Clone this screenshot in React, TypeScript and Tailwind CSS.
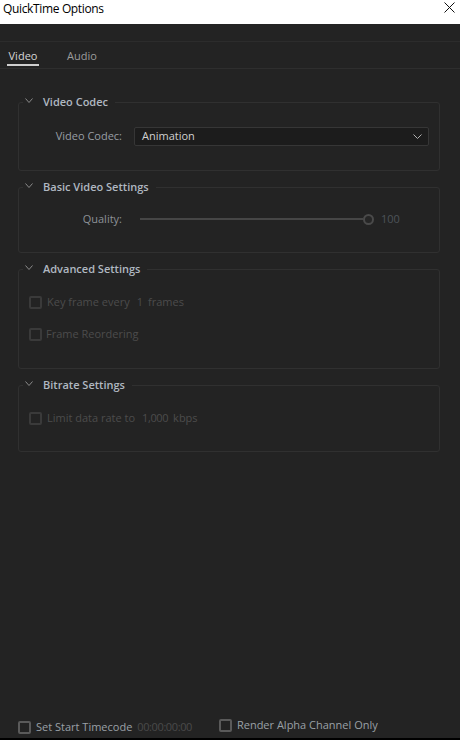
import React from "react";

const font = { fontFamily: '"Open Sans", "Noto Sans", sans-serif' };

function Chevron({ className, w = 9 }: { className?: string; w?: number }) {
  return (
    <svg width={w} height="5" viewBox={`0 0 ${w} 5`} className={className}>
      <path d={`M0.5 0.5 L${w / 2} 4.5 L${w - 0.5} 0.5`} fill="none" stroke="currentColor" strokeWidth="1" />
    </svg>
  );
}

function Box({ dim }: { dim?: boolean }) {
  return (
    <span
      className={
        "inline-block w-[13px] h-[13px] rounded-[2px] border-2 shrink-0 " +
        (dim ? "border-[#3a3a3a]" : "border-[#5a5a5a]")
      }
    />
  );
}

function Section({
  title,
  children,
  className,
}: {
  title: string;
  children: React.ReactNode;
  className?: string;
}) {
  return (
    <fieldset className={"border border-[#303030] rounded-[3px] px-[10px] " + (className ?? "")}>
      <legend className="flex items-center h-[16px] pl-[2px] pr-[7px] -ml-[6px]">
        <Chevron w={8} className="text-[#8a8a8a] mr-[10px] -mt-[4px]" />
        <span className="text-[11px] font-semibold text-[#b0b8c1] leading-[16px]">{title}</span>
      </legend>
      {children}
    </fieldset>
  );
}

export default function App() {
  return (
    <div className="w-[460px] h-[740px] bg-[#232323] flex flex-col overflow-hidden" style={font}>
      {/* Title bar */}
      <div className="h-[24px] bg-white flex items-center justify-between pl-[3px] pr-[5px] shrink-0">
        <span className="text-[12px] text-black leading-none -mt-[7px] tracking-[-0.35px]">QuickTime Options</span>
        <svg width="11" height="11" viewBox="0 0 11 11" className="-mt-[9px]">
          <path d="M0.5 0.5 L10.5 10.5 M10.5 0.5 L0.5 10.5" stroke="#111" strokeWidth="1" />
        </svg>
      </div>

      <div className="h-[18px] border-b border-[#2c2c2c] shrink-0" />

      {/* Tabs */}
      <div className="h-[27px] border-b border-[#2e2e2e] flex items-end pl-[7px] gap-[27px] shrink-0">
        <div className="flex flex-col items-center">
          <span className="text-[11px] text-[#d6d6d6] leading-none px-[1px]">Video</span>
          <span className="mt-[3px] mb-[2px] h-[2px] w-[32px] bg-[#cfcfcf]" />
        </div>
        <div className="flex flex-col items-center">
          <span className="text-[11px] text-[#9c9c9c] leading-none">Audio</span>
          <span className="mt-[3px] mb-[2px] h-[2px] w-[32px] bg-transparent" />
        </div>
      </div>

      {/* Sections */}
      <div className="flex-1 flex flex-col gap-[8px] pl-[18px] pr-[20px] pt-[25px]">
        <Section title="Video Codec" className="pt-[17px] pb-[24px]">
          <div className="flex items-center">
            <span className="w-[93px] text-right text-[11px] text-[#989ea5]">Video Codec:</span>
            <div className="ml-[12px] flex-1 h-[19px] bg-[#1c1c1c] border border-[#363636] rounded-[2px] flex items-center justify-between pl-[7px] pr-[6px]">
              <span className="text-[11px] text-[#d0d0d0]">Animation</span>
              <Chevron className="text-[#b0b0b0]" />
            </div>
          </div>
        </Section>

        <Section title="Basic Video Settings" className="pt-[16px] pb-[25px]">
          <div className="flex items-center h-[16px]">
            <span className="w-[93px] text-right text-[11px] text-[#8d9297]">Quality:</span>
            <div className="ml-[18px] w-[223px] h-[2px] bg-[#464646]" />
            <span className="w-[11px] h-[11px] rounded-full border-2 border-[#4a4a4a] bg-[#262626]" />
            <span className="ml-[7px] text-[11px] text-[#4d5359]">100</span>
          </div>
        </Section>

        <Section title="Advanced Settings" className="pt-[17px] pb-[25px]">
          <div className="flex flex-col gap-[15px]">
            <div className="flex items-center gap-[5px] h-[17px] text-[11px] text-[#4c4c4c]">
              <Box dim />
              <span>Key frame every</span>
              <span className="ml-[2px]">1</span>
              <span className="ml-[0px]">frames</span>
            </div>
            <div className="flex items-center gap-[4px] h-[17px] text-[11px] text-[#4c4c4c]">
              <Box dim />
              <span>Frame Reordering</span>
            </div>
          </div>
        </Section>

        <Section title="Bitrate Settings" className="pt-[17px] pb-[24px]">
          <div className="flex items-center gap-[5px] h-[17px] text-[11px] text-[#4c4c4c]">
            <Box dim />
            <span>Limit data rate to</span>
            <span className="ml-[2px] tracking-[-0.4px]">1,000</span>
            <span className="ml-[0px]">kbps</span>
          </div>
        </Section>
      </div>

      {/* Footer */}
      <div className="h-[24px] flex items-start pl-[18px] shrink-0">
        <div className="flex items-center gap-[5px] mt-[5px]">
          <Box />
          <span className="text-[11px] text-[#9aa0a6]">Set Start Timecode</span>
          <span className="ml-[0px] text-[11px] text-[#4a4a4a] tracking-[-0.4px]">00:00:00:00</span>
        </div>
        <div className="flex items-center gap-[5px] ml-[27px] mt-[3px]">
          <Box />
          <span className="text-[11px] text-[#9aa0a6]">Render Alpha Channel Only</span>
        </div>
      </div>
      <div className="h-[2px] bg-black shrink-0" />
    </div>
  );
}
